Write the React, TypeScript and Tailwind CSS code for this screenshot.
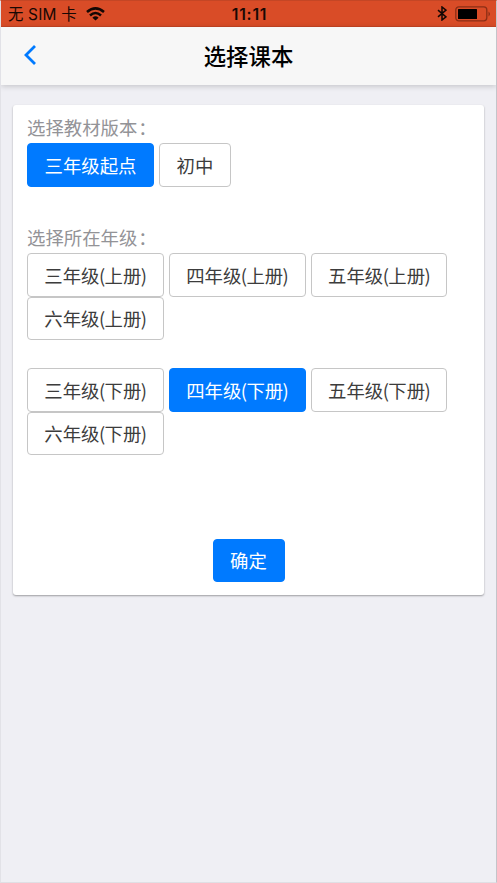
import React from "react";

type ChoiceProps = {
  label: string;
  active?: boolean;
  className: string;
};

function Choice({ label, active = false, className }: ChoiceProps) {
  const tone = active
    ? "border-[#007aff] bg-[#007aff] text-white"
    : "border-[#c6c6c6] bg-white text-[#3c3c3c]";
  return (
    <button
      type="button"
      className={`flex h-[43.6px] shrink-0 items-center justify-center whitespace-nowrap rounded border-[1.5px] text-[18.4px] leading-none ${tone} ${className}`}
    >
      {label.split(/([()])/).map((part, i) =>
        part === "(" || part === ")" ? (
          <span key={i} className="-mx-[0.6px]">{part}</span>
        ) : (
          part
        )
      )}
    </button>
  );
}

function GradeGroup({ grades, selected, className }: { grades: string[]; selected?: string; className: string }) {
  return (
    <div className={`flex flex-wrap gap-x-[5.2px] ${className}`}>
      {grades.map((grade) => (
        <Choice key={grade} label={grade} active={grade === selected} className="w-[136.7px]" />
      ))}
    </div>
  );
}

function SectionLabel({ text, className }: { text: string; className: string }) {
  return (
    <h2 className={`h-[26px] text-[18.4px] leading-[20px] text-[#939397] ${className}`}>
      {text}
      <span className="ml-[1px]">：</span>
    </h2>
  );
}

function WifiIcon() {
  return (
    <svg width="19" height="14" viewBox="0 0 19 14" fill="none" stroke="#130704" strokeWidth="2.6">
      <path d="M1 5 Q9.5 -2.2 18 5" />
      <path d="M4 8.4 Q9.5 3.6 15 8.4" />
      <path d="M6.4 10.7 Q9.5 8 12.6 10.7 L9.5 13.6 Z" fill="#130704" stroke="none" />
    </svg>
  );
}

function BluetoothIcon() {
  return (
    <svg width="10" height="15" viewBox="0 0 10 15" fill="none" stroke="#130704" strokeWidth="1.5">
      <path d="M1 4.2 L9 10.8 L5 14 V1 L9 4.2 L1 10.8" />
    </svg>
  );
}

function BatteryIcon() {
  return (
    <svg width="36" height="16" viewBox="0 0 36 16" fill="none">
      <rect x="0.8" y="0.8" width="31" height="14" rx="3" stroke="#8b2e16" strokeWidth="1.3" />
      <rect x="3" y="3" width="19" height="10" rx="0.5" fill="#000000" />
      <path d="M33.5 5.5 Q36.5 8 33.5 10.5 Z" fill="#8b2e16" />
    </svg>
  );
}

export default function App() {
  return (
    <div className="flex h-[883px] w-[497px] flex-col overflow-hidden border border-t-[#c44625] border-r-[#c4c4c9] border-b-[#dfdfe4] border-l-[#e2e2e7] bg-[#efeff4] font-['Noto_Sans_CJK_SC',sans-serif]">
      <div className="-mx-px grid h-[26px] shrink-0 grid-cols-[1fr_auto_1fr] items-center border-b border-[#c84524] bg-[#d94c27] pl-2 pr-[6px] text-[#180804]">
        <div className="flex items-center gap-[9px]">
          <span className="whitespace-nowrap pt-[2px] font-['Inter','Noto_Sans_CJK_SC',sans-serif] text-[15.4px] leading-none tracking-[0.2px]">无 SIM 卡</span>
          <WifiIcon />
        </div>
        <span className="pt-[2px] font-['Inter',sans-serif] text-[15.7px] font-semibold leading-none tracking-[0.8px]">11:11</span>
        <div className="flex items-center justify-end gap-2">
          <BluetoothIcon />
          <BatteryIcon />
        </div>
      </div>

      <header className="grid h-[58px] shrink-0 grid-cols-[1fr_auto_1fr] items-center bg-[#f7f7f7] px-[22px] shadow-[0_1px_6px_rgba(0,0,0,0.2)]">
        <svg className="mb-[2px]" width="14" height="22" viewBox="0 0 14 22" fill="none" stroke="#007aff" strokeWidth="2.8">
          <path d="M12 2 L3 11 L12 20" />
        </svg>
        <h1 className="mb-[2px] text-[22.4px] font-medium leading-none text-black">选择课本</h1>
      </header>

      <main className="mx-3 mt-5 flex h-[490px] shrink-0 flex-col rounded-[3px] bg-white pl-[14px] shadow-[0_1px_2px_rgba(0,0,0,0.35)]">
        <SectionLabel text="选择教材版本" className="mt-[12px]" />
        <div className="flex gap-[5px]">
          <Choice label="三年级起点" active className="w-[127px]" />
          <Choice label="初中" className="w-[72px]" />
        </div>

        <SectionLabel text="选择所在年级" className="mt-[40.4px]" />
        <GradeGroup grades={["三年级(上册)", "四年级(上册)", "五年级(上册)", "六年级(上册)"]} className="" />
        <GradeGroup
          grades={["三年级(下册)", "四年级(下册)", "五年级(下册)", "六年级(下册)"]}
          selected="四年级(下册)"
          className="mt-[27.8px]"
        />

        <div className="mt-[83.6px] flex justify-center pr-[14px]">
          <Choice label="确定" active className="w-[72px]" />
        </div>
      </main>
    </div>
  );
}
